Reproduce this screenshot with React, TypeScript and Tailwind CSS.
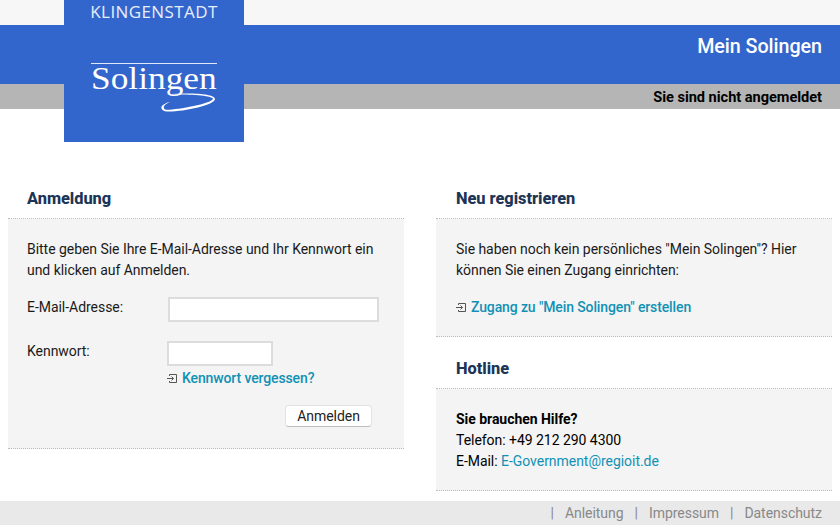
import React from "react";

function LinkIcon() {
  return (
    <svg width="10" height="9" viewBox="0 0 10 9" fill="none" stroke="#555" strokeWidth="1" className="shrink-0">
      <path d="M2.5 2V0.5H9.5V8.5H2.5V7" />
      <path d="M0 4.5H6.5M4.5 2.5L6.5 4.5L4.5 6.5" />
    </svg>
  );
}

function Heading({ children, inset }: { children: React.ReactNode; inset: string }) {
  return (
    <h2 className={`h-[39px] ${inset} pt-[8.5px] text-[16.4px] leading-[20px] font-extrabold text-[#1c3557] border-b border-dotted border-[#bbbbbb]`}>
      {children}
    </h2>
  );
}

const link = "text-[#1191b5] font-medium tracking-[-0.12px]";

export default function App() {
  return (
    <div className="relative h-[525px] w-[840px] overflow-hidden flex flex-col bg-white text-[14px] leading-[21px] tracking-[-0.04px] text-[#1a1a1a] font-['Roboto',sans-serif]">
      <header className="shrink-0">
        <div className="h-[25px] bg-[#f7f7f7]" />
        <div className="h-[59px] bg-[#3366cc] flex justify-end items-start pt-[9px] pr-[18px] text-white text-[19.7px] leading-[26px] font-medium">
          Mein Solingen
        </div>
        <div className="h-[25px] bg-[#b5b5b5] flex justify-end items-center pt-[1px] pr-[18px] text-[14.6px] font-bold text-black">
          Sie sind nicht angemeldet
        </div>
      </header>

      <div className="absolute left-[64px] top-0 w-[180px] h-[142px] bg-[#3366cc] text-white flex flex-col items-center">
        <div className="h-[25px] text-[17px] leading-[24px] tracking-[0.4px] font-['Open_Sans',sans-serif] text-[#e8eefa]">KLINGENSTADT</div>
        <div className="mt-[38px] w-[126px] h-px bg-[#dfe7f7]" />
        <div className="relative w-[126px] h-[60px]">
          <span className="absolute left-0 top-[-5px] origin-left scale-x-[1.14] text-[31px] leading-[40px] tracking-normal font-['Liberation_Serif',serif]">Solingen</span>
          <svg className="absolute left-0 top-0" width="126" height="60" viewBox="0 0 126 60" fill="none">
            <path d="M76 30.5 C95 28.5 124 29 124 35 C124 41 92 48 76 47.5 C70 47 69 43 72 41 C75 39 77 38 79 38 C74 40 71 43 74 45.5 C80 47 120 40 122 35 C122 31 95 30 76 30.5 Z" fill="white" />
          </svg>
        </div>
      </div>

      <main className="mt-[71px] ml-[8px] flex gap-[32px] items-start">
        <section className="w-[396px]">
          <Heading inset="pl-[19px]">Anmeldung</Heading>
          <div className="h-[230px] bg-[#f4f4f4] border-b border-dotted border-[#bbbbbb] pl-[19px] pt-[20px] pr-[24px]">
            <p className="whitespace-nowrap">Bitte geben Sie Ihre E-Mail-Adresse und Ihr Kennwort ein<br />und klicken auf Anmelden.</p>
            <div className="mt-[16px] flex items-center">
              <span className="w-[141px] -mt-[4px]">E-Mail-Adresse:</span>
              <input aria-label="E-Mail-Adresse" className="w-[211px] h-[25px] bg-white border-2 border-[#dcdcdc] outline-none" />
            </div>
            <div className="mt-[19px] flex items-start">
              <span className="w-[140px]">Kennwort:</span>
              <div>
                <input aria-label="Kennwort" className="block w-[106px] h-[25px] bg-white border-2 border-[#dcdcdc] outline-none" />
                <div className="mt-[2px] flex items-center gap-[5px]">
                  <LinkIcon />
                  <a className={link}>Kennwort vergessen?</a>
                </div>
              </div>
            </div>
            <div className="mt-[16px] flex justify-end pr-[8px]">
              <button className="w-[87px] h-[22px] bg-white rounded-[4px] border border-[#e2e2e2] border-b-[#bdbdbd] text-[14px] leading-[18px] text-[#222]">Anmelden</button>
            </div>
          </div>
        </section>

        <section className="w-[396px]">
          <Heading inset="pl-[20px]">Neu registrieren</Heading>
          <div className="h-[118px] bg-[#f4f4f4] border-b border-dotted border-[#bbbbbb] pl-[20px] pt-[20px]">
            <p>Sie haben noch kein persönliches "Mein Solingen"? Hier<br />können Sie einen Zugang einrichten:</p>
            <div className="mt-[16px] flex items-center gap-[5px]">
              <LinkIcon />
              <a className={link}>Zugang zu "Mein Solingen" erstellen</a>
            </div>
          </div>
          <div className="mt-[13px]">
            <Heading inset="pl-[20px]">Hotline</Heading>
          </div>
          <div className="h-[102px] bg-[#f4f4f4] border-b border-dotted border-[#bbbbbb] pl-[20px] pt-[20px]">
            <p className="font-bold text-black">Sie brauchen Hilfe?</p>
            <p className="text-black">Telefon: +49 212 290 4300</p>
            <p className="text-black">E-Mail: <a className="text-[#1191b5]">E-Government@regioit.de</a></p>
          </div>
        </section>
      </main>

      <footer className="mt-auto h-[24px] bg-[#e9e9e9] flex justify-end items-center gap-[11px] pt-[1px] pr-[18px] text-[14px] text-[#888888]">
        <span>|</span><a>Anleitung</a><span>|</span><a>Impressum</a><span>|</span><a>Datenschutz</a>
      </footer>
    </div>
  );
}
